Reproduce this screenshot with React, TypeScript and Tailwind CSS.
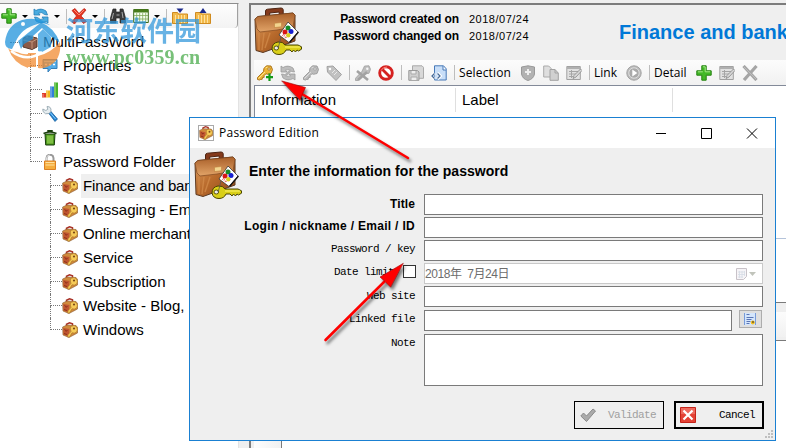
import React from "react";

const ARIAL = "font-['Liberation_Sans',Arial,sans-serif]";
const SEGOE = "font-['Open_Sans','Noto_Sans',sans-serif]";
const MONO = "font-['Liberation_Mono','Noto_Sans_CJK_SC',monospace]";

type Kids = { children?: React.ReactNode; className?: string };

function Icon({ children, className = "" }: Kids) {
  return (
    <svg viewBox="0 0 16 16" className={`h-4 w-4 shrink-0 ${className}`}>
      {children}
    </svg>
  );
}

function Briefcase({ className = "" }: { className?: string }) {
  return (
    <svg viewBox="0 0 48 48" className={`h-12 w-12 shrink-0 ${className}`}>
      <defs>
        <linearGradient id="leather" x1="0" y1="0" x2="1" y2="1">
          <stop offset="0" stopColor="#e0a061" />
          <stop offset=".5" stopColor="#b86a2c" />
          <stop offset="1" stopColor="#8c4717" />
        </linearGradient>
        <linearGradient id="flap" x1="0" y1="0" x2="0" y2="1">
          <stop offset="0" stopColor="#a9602a" />
          <stop offset="1" stopColor="#e2a468" />
        </linearGradient>
      </defs>
      <path d="M11.500 10V4q0-1.500 2-1.800L27 1q2 0 2.200 1.700V8l-4 .6V5l-9.500 1v4z" fill="#843a1c" stroke="#4d2412" />
      <path d="M1 12 4 9.500 39 6l2 2v26L9 45.500l-7-2z" fill="url(#leather)" stroke="#5c3a22" />
      <path d="M1 12 4 9.500 39 6l2 2-2 12-16 3-17 2-3-3z" fill="url(#flap)" stroke="#804820" strokeWidth=".7" />
      <path d="M5 26v17M10 26l-2 17M16 26l-5 15" stroke="#d58e4d" strokeWidth="1.400" opacity=".7" />
      <path d="M20.500 16.300l7-.8v4.200l-7 .9z" fill="#f2d48e" stroke="#b87934" strokeWidth=".5" />
      <path d="M34 15 44 25 35 35.500 25 28z" fill="#fff" stroke="#222" strokeWidth=".7" />
      <path d="m44.500 25-9 10.500" stroke="#111" strokeWidth="1.200" />
      <circle cx="34" cy="21" r="2.500" fill="#168b26" />
      <circle cx="31" cy="25" r="2.500" fill="#d81515" />
      <circle cx="37" cy="24.500" r="2.500" fill="#1620d0" />
      <circle cx="34.300" cy="28.300" r="2.200" fill="#d8ce20" />
      <path d="m28 28 4 3m-3-4 4 4" stroke="#d81515" strokeWidth=".8" strokeDasharray="1 1" />
      <path
        d="M31 38h13l3.500 1.800v2.400l-3 1.800-1.500-1-1.500 2-2-2-1.500 2-2-2h-4q-2 4.500-7 4.500-6 0-7-5.500 0-6 6-7 5-.5 7 3z"
        fill="#d9cf18"
        stroke="#494500"
        strokeWidth="1"
      />
      <path d="M31 40h15" stroke="#fff56a" />
      <ellipse cx="22.300" cy="41" rx="2.300" ry="2" fill="#eee" stroke="#494500" strokeWidth=".9" />
      <path d="M24 41c2-6 2-8 3-11" stroke="#555" strokeWidth=".8" fill="none" />
    </svg>
  );
}

function BagIcon({ className = "" }: { className?: string }) {
  return (
    <Icon className={className}>
      <path d="M4.500 4V2.200L7.500.8l3 1v2" fill="none" stroke="#a83227" strokeWidth="1.500" />
      <path d="M.6 5 5 3l9 .5 1.500 2V11L7 15.500l-6-2.500z" fill="#d08a3c" stroke="#8a5a30" strokeWidth=".6" />
      <path d="M1.200 6 7.500 7l-.8 7.500L1.500 12.500z" fill="#c05530" />
      <path d="m2.500 7.500 2 1.500m1-1L4 9.500M2 11.500l3 1" stroke="#7d2717" strokeWidth=".8" />
      <path
        d="M8.500 4.500 12 3.600q3.300.7 3.400 4 0 3-3 3.500L10 10.800 7.500 15H5.500l.5-2.300 3-3.200Q8 7 8.500 4.500z"
        fill="#f6cb58"
        stroke="#a87325"
        strokeWidth=".6"
      />
      <circle cx="12" cy="6.500" r="1.100" fill="#7b4a18" />
    </Icon>
  );
}

function PlusIcon() {
  return (
    <Icon>
      <path d="M5.800.8h4.400v5h5v4.400h-5v5H5.800v-5h-5V5.800h5z" fill="#43b827" stroke="#268312" />
      <path d="M6.800 1.800h2.400v5h5M1.800 6.800h5" fill="none" stroke="#a4e988" strokeWidth="1" />
    </Icon>
  );
}

function RedCross() {
  return (
    <Icon>
      <path d="M1 2.500 4 .5l4 5 5-5 2 1.500-5 6 5.500 5.500-3 2L8 10.500 3.500 16 .8 14 5.500 8z" fill="#e5331f" stroke="#b81e12" strokeWidth=".7" />
      <path d="m3 2 5 5 5-5" stroke="#ff8974" fill="none" />
    </Icon>
  );
}

function RefreshIcon({ gray = false }: { gray?: boolean }) {
  const fill = gray ? "#bdbdbd" : "#4aace0";
  const edge = gray ? "#9b9b9b" : "#237eb8";
  return (
    <Icon>
      <path d="M1 1l2 1.500Q8-.5 13 3l1.500 4-3-.5Q9 3.500 5.500 5L7 7H1z" fill={fill} stroke={edge} strokeWidth=".8" />
      <path d="M15 15l-2-1.500Q8 16.500 3 13L1.500 9l3 .5Q7 12.500 10.500 11L9 9h6z" fill={fill} stroke={edge} strokeWidth=".8" />
      {gray && <path d="m5 11 6-6" stroke="#b3b3b3" strokeWidth="2.500" />}
    </Icon>
  );
}

function KeyIcon({ gold = false }: { gold?: boolean }) {
  return (
    <Icon>
      <path
        d="M9.500.8 14 1l1.500 3.500-1.500 4-3.500.8-1.500-.6-2 2 .2 1.600-1.700.2-.3 1.800-2 .2L2.500 15l-2-.5v-2l6-6Q6 3 9.500.8z"
        fill={gold ? "#edb436" : "#bcbcbc"}
        stroke={gold ? "#a56c12" : "#999"}
        strokeWidth=".9"
      />
      <path d="M1.500 13.500 8 7M8.500 3l2-1" stroke={gold ? "#ffe99a" : "#e0e0e0"} strokeWidth=".9" />
      <circle cx="12" cy="4" r="1.200" fill={gold ? "#fff5d8" : "#f5f5f5"} stroke={gold ? "#966414" : "#929292"} strokeWidth=".7" />
      {gold && <path d="M12.500 8.500V16M9 12.200h7" stroke="#149a19" strokeWidth="2.200" />}
    </Icon>
  );
}

function EditTableIcon() {
  return (
    <Icon>
      <path d="M.8 1.500h13.500v13H.8z" fill="#e1e1e1" stroke="#a1a1a1" />
      <path d="M1 3h13" stroke="#b0b0b0" strokeWidth="2" />
      <path d="M3 6.500h9M3 9h7M3 11.500h4M5.500 5v8" stroke="#a5a5a5" />
      <path d="m7 13.500 1-3L14.500 4 16 5.500 10 12z" fill="#d8d8d8" stroke="#888" strokeWidth=".8" />
    </Icon>
  );
}

function GrayCross() {
  return (
    <Icon>
      <path d="m1.500 1 13 14M14.500 1 2 15" stroke="#a5a5a5" strokeWidth="3.200" />
      <path d="m2 2 12 12" stroke="#bdbdbd" strokeWidth="1" />
    </Icon>
  );
}

function FolderIcon({ up = false }: { up?: boolean }) {
  return (
    <Icon>
      <path d="M.5 4.500h5l1 1.500h9v9.500H.5z" fill="#f2b94b" stroke="#d08b1e" />
      <path d="M3.500 7v8M6.500 7v8M9.500 7v8M12.500 7v8" stroke="#ffe19c" />
      <path d={up ? "M4.500 5 8 0l3.500 5z" : "M4.500.5h7L8 5z"} fill="#1d2a8c" />
    </Icon>
  );
}

function Caret() {
  return <span className="h-0 w-0 border-x-[3px] border-t-[3px] border-x-transparent border-t-black" />;
}

function Sep({ className = "" }: { className?: string }) {
  return <span className={`h-[15px] w-px bg-[#bdbdbd] ${className}`} />;
}

function LeftToolbar() {
  return (
    <div className="flex h-[24px] shrink-0 items-center rounded-br-sm border-r border-[#a0a0a0] bg-linear-to-b from-[#fdfdfd] to-[#f3f3f3] pl-[1px]">
      <PlusIcon />
      <span className="ml-[5px] mr-[5px] flex"><Caret /></span>
      <RefreshIcon />
      <span className="ml-[5px] flex"><Caret /></span>
      <Sep className="ml-[6px] mr-[4px]" />
      <RedCross />
      <span className="ml-[5px] flex"><Caret /></span>
      <Sep className="ml-[6px] mr-[5px]" />
      <Icon>
        <path d="M3 1h3v3h4V1h3l2.500 9v5H10v-5H6v5H.5v-5z" fill="#3b3b3b" stroke="#222" strokeWidth=".7" />
        <path d="M3.500 5 2 11m10-7 1 6M6.500 7h3" stroke="#aaa" />
      </Icon>
      <span className="w-[7px]" />
      <Icon>
        <path d="M.7 1.500h14.600v13H.7z" fill="#f7fff0" stroke="#3d6b18" />
        <path d="M1 3h14" stroke="#487c1b" strokeWidth="3" />
        <path d="M3.700 5v9M6.700 5v9M9.700 5v9M12.700 5v9M1 7.500h14M1 11h14" stroke="#80a85b" strokeWidth=".8" />
      </Icon>
      <span className="ml-[5px] flex"><Caret /></span>
      <Sep className="ml-[6px] mr-[5px]" />
      <FolderIcon />
      <span className="w-[7px]" />
      <FolderIcon up />
    </div>
  );
}

function Guide({ last = false }: { last?: boolean }) {
  return (
    <span className="flex h-6 w-[12px] shrink-0 flex-col">
      <span className="h-[12px] border-b border-l border-dotted border-[#777]" />
      {!last && <span className="h-[12px] border-l border-dotted border-[#777]" />}
    </span>
  );
}

const sections: { label: string; icon: React.ReactNode }[] = [
  {
    label: "Properties",
    icon: (
      <Icon>
        <path d="M1 1.500h14v9H9L6 14v-3.500H1z" fill="#54ace8" stroke="#347fb9" />
        <path d="M2 3.500h12" stroke="#a4dcff" />
        <path d="M3 6.500h2m2 0h2m2 0h2" stroke="#fff" strokeWidth="1.700" />
      </Icon>
    ),
  },
  {
    label: "Statistic",
    icon: (
      <Icon>
        <path d="M0 11h4v4.500H0z" fill="#e03a28" />
        <path d="M4 8.500h4v7H4z" fill="#f2b61d" />
        <path d="M8 4.500h4v11H8z" fill="#317fd8" />
        <path d="M12 .5h4v15h-4z" fill="#47b52c" />
        <path d="M1 12v3M5 9v6M9 5v10M13 1v14" stroke="#fff" opacity=".5" />
      </Icon>
    ),
  },
  {
    label: "Option",
    icon: (
      <Icon>
        <path d="m6.500 7 2-2 7 8-2.500 2.500z" fill="#2183d2" stroke="#125894" strokeWidth=".7" />
        <path d="m.8 3 3 1.500 2-1.200L5 .5Q8 0 9 3q.5 3-2 4.500-4 1.500-6-2z" fill="#e6edf0" stroke="#8da0aa" strokeWidth=".8" />
        <path d="m8.500 7 5 6" stroke="#8ed1ff" />
      </Icon>
    ),
  },
  {
    label: "Trash",
    icon: (
      <Icon>
        <path d="M3 4h10l-.7 11H3.700z" fill="#4c981d" stroke="#183d0b" />
        <path d="M6 5.500v8M8 5.500v8M10 5.500v8" stroke="#b2e56d" />
        <path d="M6 2V.7h4V2m-8.500 1.500q6.500-3 13 0" fill="none" stroke="#183d0b" strokeWidth="1.500" />
      </Icon>
    ),
  },
  {
    label: "Password Folder",
    icon: (
      <Icon>
        <path d="M4.500 8V4q.3-3.200 3.500-3.200T11.500 4v4" fill="none" stroke="#999" strokeWidth="2" />
        <path d="M4.500 7V4Q5 1 8 1" fill="none" stroke="#ddd" />
        <path d="M2.500 7h11v8.500h-11z" fill="#f5ad3d" stroke="#db7f23" />
        <path d="M3.500 8.500h9m-9 2.500h9" stroke="#ffe0a0" />
      </Icon>
    ),
  },
];

const folders = ["Finance and bank", "Messaging - Email", "Online merchant", "Service", "Subscription", "Website - Blog, Forum", "Windows"];

function Sidebar() {
  return (
    <aside className="flex h-full w-[239px] shrink-0 flex-col overflow-hidden border-r border-[#e3e3e3] border-t border-t-[#8d8d8d] bg-white">
      <LeftToolbar />
      <div className="mt-[2px] flex h-6 items-center pl-[10px]">
        <span className="mr-[2px] w-[10px] border-t border-dotted border-[#777]" />
        <Icon>
          <path d="M1 4.500 5 2l10 2v9l-5 2.500L1 13z" fill="#8c5b48" stroke="#55392d" />
          <path d="M5 4V1.500L11 2v3M1 6l9 2v7m0-7 5-3" fill="none" stroke="#c39378" />
        </Icon>
        <span className="ml-[5px] tracking-[0.05px]">MultiPassWord</span>
      </div>
      {sections.map((s, i) => (
        <div key={s.label} className="flex h-6 shrink-0 items-center pl-[30px]">
          <Guide last={i === 4} />
          {s.icon}
          <span className="ml-[5px]">{s.label}</span>
        </div>
      ))}
      {folders.map((f, i) => (
        <div key={f} className="flex h-6 shrink-0 items-center pl-[50px]">
          <Guide last={i === 6} />
          <BagIcon />
          <span
            className={`ml-[3px] flex h-6 items-center whitespace-nowrap pl-[2px] ${i === 0 ? "grow bg-[#efefef]" : ""} ${i === 0 || i === 2 ? "tracking-[-0.15px]" : ""}`}
          >
            {f}
          </span>
        </div>
      ))}
    </aside>
  );
}

function RightToolbar() {
  return (
    <div className={`flex h-[25px] shrink-0 items-center bg-linear-to-b from-[#fcfcfc] to-[#f1f1f1] pl-[3px] text-[12px] ${SEGOE}`}>
      <div className="flex gap-[7px]">
        <KeyIcon gold />
        <RefreshIcon gray />
        <KeyIcon />
        <Icon>
          <path d="M1 1.500 7 1l8.500 8.500-5.500 6L1.500 7z" fill="#c1c1c1" stroke="#a2a2a2" />
          <path d="m6 8 3-3m-1 5 3-3" stroke="#e9e9e9" />
          <circle cx="4" cy="4" r="1.200" fill="#fff" />
        </Icon>
      </div>
      <Sep className="ml-[7px] mr-[5px]" />
      <Icon>
        <path d="M9.500 1 14 .8l1.500 3.500-1.500 4-4 .5L3 15.500H.5v-2.200l6.500-7z" fill="#bdbdbd" stroke="#a0a0a0" strokeWidth=".8" />
        <circle cx="12.300" cy="3.800" r="1.200" fill="#f5f5f5" />
        <path d="m2 6 11 9M12 7 3 15" stroke="#a2a2a2" strokeWidth="2.600" />
      </Icon>
      <span className="w-[7px]" />
      <Icon>
        <circle cx="8" cy="8" r="6.300" fill="#fff" stroke="#d52120" strokeWidth="2.900" />
        <path d="m3.500 3.500 9 9" stroke="#d52120" strokeWidth="2.900" />
        <path d="M3 5.500Q5 1.800 9 2" fill="none" stroke="#ff8e82" strokeWidth=".9" />
      </Icon>
      <Sep className="ml-[7px] mr-[6px]" />
      <Icon>
        <path d="M4.500.8H14l1.500 1.500v11h-11z" fill="#d8d8d8" stroke="#aaa" />
        <path d="M.8 5.500h8.500L11 7v8.300H.8z" fill="#cfcfcf" stroke="#999" />
        <path d="M3 6v3h5V6M3 15v-3h6v3" fill="#eee" stroke="#aaa" />
      </Icon>
      <span className="w-[7px]" />
      <Icon>
        <path d="M3.500.8h9l2.700 3V15H3.500z" fill="#c8def8" stroke="#4678b7" />
        <path d="M12 1v4h3" fill="#fff" stroke="#4678b7" />
        <path d="M3.500 8 .8 11l2.700 3m3-6 2.700 3-2.700 3" fill="none" stroke="#fff" strokeWidth="3.200" />
        <path d="M3.500 8.500 1 11l2.500 2.500m3-5L9 11l-2.500 2.500" fill="none" stroke="#456a98" strokeWidth="1.300" />
      </Icon>
      <Sep className="ml-[7px] mr-[5px]" />
      <span className="-ml-px w-[61px] tracking-[0.15px]">Selection</span>
      <Icon>
        <path d="M1.500 2 8 .8 14.500 2v7q-1 5-6.500 6.500Q2.500 14 1.500 9z" fill="#b2b2b2" stroke="#999" />
        <path d="M8 4v6M5 7h6" stroke="#eee" strokeWidth="2" />
      </Icon>
      <span className="w-[7px]" />
      <Icon>
        <path d="M.7 1h5l2.500 2.500V12H.7z" fill="#dedede" stroke="#aaa" />
        <path d="M7 4.500h5L15.300 8v7.300H7z" fill="#d0d0d0" stroke="#a2a2a2" />
        <path d="M12 4.500V8h3" fill="none" stroke="#a2a2a2" />
      </Icon>
      <span className="w-[7px]" />
      <EditTableIcon />
      <Sep className="ml-[7px] mr-[5px]" />
      <span className="-ml-px w-[32px]">Link</span>
      <Icon>
        <circle cx="8" cy="8" r="7.200" fill="#bcbcbc" stroke="#a2a2a2" />
        <circle cx="8" cy="8" r="5.200" fill="#aaa" stroke="#ddd" />
        <path d="m6.300 4.500 5 3.500-5 3.500z" fill="#fff" />
      </Icon>
      <Sep className="ml-[7px] mr-[5px]" />
      <span className="-ml-px w-[42px]">Detail</span>
      <div className="flex gap-[7px]">
        <PlusIcon />
        <EditTableIcon />
        <GrayCross />
      </div>
    </div>
  );
}

function Content() {
  return (
    <main className="ml-[10px] flex h-full w-[537px] shrink-0 flex-col overflow-hidden border-l-2 border-t-2 border-[#7c7c7c] bg-[#efefef] pl-[3px]">
      <div className="flex h-[55px] shrink-0 pt-[2px]">
        <Briefcase />
        <div className="ml-[24px] mt-[4px] w-[133px] shrink-0 whitespace-nowrap text-right text-[12px] font-bold leading-[17px] tracking-[-0.1px]">
          <div>Password created on</div>
          <div>Password changed on</div>
        </div>
        <div className="ml-[10px] mt-[4px] w-[80px] shrink-0 text-[11px] leading-[17px] tracking-[0.5px]">
          <div>2018/07/24</div>
          <div>2018/07/24</div>
        </div>
        <div className="ml-[70px] mt-[11px] shrink-0 whitespace-nowrap text-[20px] font-bold leading-[28px] text-[#0078d7]">Finance and bank</div>
      </div>
      <RightToolbar />
      <div className="flex h-[153px] shrink-0 border-l border-t border-[#838a99] bg-white pt-[2px]">
        <div className="flex h-[24px] w-[201px] items-center border-r border-[#dfdfdf] pl-[6px]">Information</div>
        <div className="flex h-[24px] w-[217px] items-center border-r border-[#dfdfdf] pl-[6px]">Label</div>
      </div>
      <div className="h-[65px] shrink-0 border-b border-l border-t border-b-[#7a7a7a] border-l-[#838a99] border-t-[#b4c3da] bg-white" />
      <div className="h-[9px] shrink-0" />
      <div className="h-[25px] shrink-0 bg-linear-to-b from-[#fcfcfc] to-[#f1f1f1]" />
      <div className="mt-[3px] flex grow border-t border-[#7a7a7a] bg-white">
        <div className="w-[28px] border-r border-[#7a7a7a] bg-linear-to-r from-[#fdfdfd] to-[#f1f1f1]" />
      </div>
    </main>
  );
}

function Watermark() {
  return (
    <div className="pointer-events-none absolute left-[4px] top-[14px] flex opacity-75">
      <svg viewBox="0 0 58 56" className="h-[56px] w-[58px] shrink-0">
        <path d="M1 28Q3 11 18 6 34 2 46 11L38 9Q20 12 13 25L8 35Q1 35 1 28z" fill="#2194dc" />
        <path d="M14 27 37 8.500Q50 13 56 29L46 22 38 14l-9 8v3l-9 5-3 5z" fill="#2194dc" />
        <path d="M34 20 39 15l8 8v10l-9 5-4-1z" fill="#2f9cdf" />
        <path d="M4 34q3 3 9 4 7 3 11 2v14Q9 49 4 34z" fill="#f28c32" />
        <path d="M34 42q13-3 22-14 2 19-13 25-5 2-9 1z" fill="#f28c32" />
        <path d="M24 39h8v14h-8z" fill="#f28c32" />
        <path d="M7 37q16 12 31 1" fill="none" stroke="#fff" strokeWidth="2.500" />
        <circle cx="19" cy="10" r="2" fill="#fff" />
      </svg>
      <div className="ml-[4px] whitespace-nowrap">
        <div className="h-[32px] font-['Noto_Sans_CJK_SC',sans-serif] text-[27px] font-bold leading-[31px] text-[#3599dc]">河东软件园</div>
        <div className="font-['Liberation_Serif',serif] text-[20px] font-bold leading-[23px] tracking-[0.15px] text-[#4aac4c]">www.pc0359.cn</div>
      </div>
    </div>
  );
}

function Label({ children, className = "" }: Kids) {
  return <div className={`w-[225px] shrink-0 whitespace-pre text-right ${className}`}>{children}</div>;
}

const field = "ml-[9px] h-[21px] w-[339px] shrink-0 border border-[#7a7a7a] bg-white";
const mono = "text-[11px] tracking-[-0.6px]";

function Dialog() {
  return (
    <section className="absolute left-[189px] top-[117px] flex h-[324px] w-[587px] flex-col border border-[#1a80d2] bg-[#efefef]">
      <header className={`flex h-[30px] shrink-0 items-center bg-white pl-[8px] text-[12px] ${SEGOE}`}>
        <span className="flex border border-[#aaa]"><BagIcon className="h-[14px] w-[14px]" /></span>
        <span className="ml-[5px] w-[437px] tracking-[0.25px]">Password Edition</span>
        <svg viewBox="0 0 102 11" className="h-[11px] w-[102px]" fill="none" stroke="#000">
          <path d="M0 5.500h10M45.500.5h10v10h-10zM91 .5l10 10m0-10-10 10" />
        </svg>
      </header>
      <div className="flex h-[46px] shrink-0 pl-[4px] pt-[3px]">
        <Briefcase />
        <h1 className="ml-[7px] mt-[10px] whitespace-nowrap text-[14px] font-bold leading-[20px] tracking-[0.03px]">Enter the information for the password</h1>
      </div>
      <div className={`flex flex-col gap-[2px] ${MONO} ${mono}`}>
        <div className="flex leading-[21px]">
          <Label className={`text-[12px] font-bold tracking-[0.1px] ${ARIAL}`}>Title</Label>
          <div className={field} />
        </div>
        <div className="flex leading-[19px]">
          <Label className={`text-[12px] font-bold tracking-[0.3px] ${ARIAL}`}>Login / nickname / Email / ID</Label>
          <div className={field} />
        </div>
        <div className="flex leading-[18px]">
          <Label>Password / key</Label>
          <div className={field} />
        </div>
        <div className="flex leading-[18px]">
          <div className="w-[204px] text-right">Date limit</div>
          <span className="ml-[9px] mt-[2px] h-[13px] w-[13px] border border-[#333] bg-white" />
          <div className="ml-[8px] flex h-[21px] w-[339px] items-center border border-[#c9c9c9] bg-white pr-[6px]">
            <span className="grow whitespace-pre font-['Liberation_Sans','Noto_Sans_CJK_SC',sans-serif] text-[12px] tracking-[-0.45px] text-[#6d6d6d]">2018年  7月24日</span>
            <svg viewBox="0 0 20 12" className="h-[12px] w-[20px]">
              <path d="M.5.5h10v8l-3 3h-7z" fill="#f6f4f7" stroke="#c8c2c8" />
              <path d="M2 4h7M2 6.500h7M2 9h5M3.500 3v7M6 3v7M8.500 3v5" stroke="#d6dce5" strokeWidth=".8" />
              <path d="M13 4h7l-3.500 4z" fill="#c1c4bb" />
            </svg>
          </div>
        </div>
        <div className="flex leading-[20px]">
          <Label>Web site</Label>
          <div className={field} />
        </div>
        <div className="mt-px flex leading-[18px]">
          <Label>Linked file</Label>
          <div className="ml-[9px] h-[21px] w-[308px] border border-[#7a7a7a] bg-white" />
          <div className="ml-[7px] flex h-[18px] w-[23px] items-center justify-center border border-[#adadad] bg-[#dfdfdf]">
            <svg viewBox="0 0 13 13" className="h-[13px] w-[13px]">
              <path d="M1 0h11v12H1z" fill="#d3e5fc" />
              <path d="M11.500 0v12M.5 0v12" stroke="#779bda" />
              <path d="M2.500 1.500h3M2.500 4.500h7M2.500 6.500h5M2.500 8.500h4M2.500 10.500h3" stroke="#5a75b5" />
              <circle cx="8.800" cy="9.500" r="2" fill="#f3bd19" />
              <path d="M9 8v2" stroke="#333" />
            </svg>
          </div>
        </div>
        <div className="mt-px flex leading-[19px]">
          <Label>Note</Label>
          <div className="ml-[9px] h-[52px] w-[339px] border border-[#7a7a7a] bg-white" />
        </div>
      </div>
      <footer className={`mt-[15px] flex justify-end gap-[10px] pr-[11px] ${MONO} ${mono}`}>
        <button className="flex h-[28px] w-[90px] items-center justify-between border border-black pl-[5px] pr-[7px] text-[#a0a0a0]">
          <Icon>
            <path d="M.8 9 3.500 6l3 3L13 2l2.500 2L6.500 14.500z" fill="#aaa" stroke="#8a8a8a" />
          </Icon>
          Validate
        </button>
        <button className="flex h-[28px] w-[90px] items-center justify-between border-2 border-black pl-[4px] pr-[7px]">
          <Icon>
            <path d="M.5.5h15v15H.5z" fill="#e44235" stroke="#c52319" />
            <path d="M1 1h14v6H1z" fill="#f48478" opacity=".6" />
            <path d="m3.500 3.500 9 9m0-9-9 9" stroke="#fff" strokeWidth="2.200" />
          </Icon>
          Cancel
        </button>
      </footer>
      <svg viewBox="0 0 8 8" className="absolute bottom-[2px] right-[2px] h-[8px] w-[8px]" fill="#bfbfbf">
        <path d="M6 0h2v2H6zM6 3h2v2H6zM3 3h2v2H3zM6 6h2v2H6zM3 6h2v2H3zM0 6h2v2H0z" />
      </svg>
    </section>
  );
}

function Arrows() {
  return (
    <svg viewBox="0 0 786 448" className="pointer-events-none absolute left-0 top-0 h-[448px] w-[786px] [filter:drop-shadow(2px_3px_1.5px_rgba(0,0,0,0.5))]">
      <g fill="#f00" stroke="#f00" strokeLinecap="round">
        <path d="m302 94 106 64" strokeWidth="2.600" />
        <path d="m282 81 23.500 6.500-3 6.500-2.500 6z" stroke="#a00000" strokeWidth=".6" />
        <path d="m384 282-58.500 58" strokeWidth="2.600" />
        <path d="M403 263.500 380 277l5 4.500 5.500 5.500z" stroke="#a00000" strokeWidth=".6" />
      </g>
    </svg>
  );
}

export default function App() {
  return (
    <div className={`relative flex h-[448px] w-[786px] overflow-hidden bg-[#efefef] pt-[3px] text-[15px] leading-[18px] text-black ${ARIAL}`}>
      <Sidebar />
      <Content />
      <Watermark />
      <Dialog />
      <Arrows />
    </div>
  );
}
